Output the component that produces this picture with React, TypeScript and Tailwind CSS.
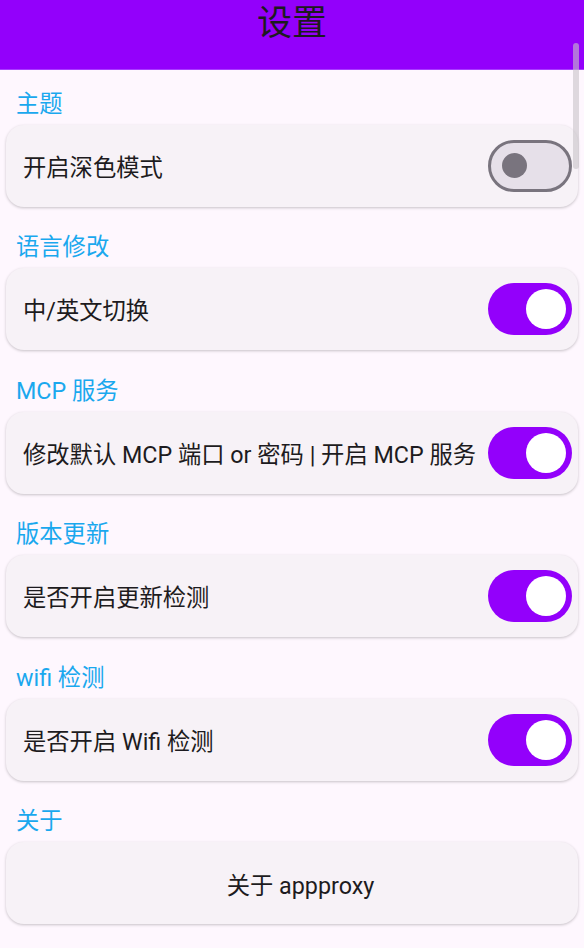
import React, { useState } from "react";

const font = { fontFamily: "Roboto, 'Noto Sans CJK SC', sans-serif" };

function Toggle({ on, onChange }: { on: boolean; onChange: () => void }) {
  return (
    <button
      onClick={onChange}
      className={`relative h-[52px] w-[84px] shrink-0 rounded-full ${
        on ? "bg-[#9300fb]" : "border-[3px] border-[#79747e] bg-[#e6e0e9]"
      }`}
    >
      {on ? (
        <span className="absolute right-[6px] top-[6px] h-[40px] w-[40px] rounded-full bg-white" />
      ) : (
        <span className="absolute left-[11px] top-[10.5px] h-[25px] w-[25px] rounded-full bg-[#79747e]" />
      )}
    </button>
  );
}

type Item = { title: string; label: string; on: boolean };

const initial: Item[] = [
  { title: "主题", label: "开启深色模式", on: false },
  { title: "语言修改", label: "中/英文切换", on: true },
  { title: "MCP 服务", label: "修改默认 MCP 端口 or 密码 | 开启 MCP 服务", on: true },
  { title: "版本更新", label: "是否开启更新检测", on: true },
  { title: "wifi 检测", label: "是否开启 Wifi 检测", on: true },
];

function SectionTitle({ children }: { children: React.ReactNode }) {
  return <div className="h-[44px] pl-4 pt-[1px] text-[23.3px] leading-[44px] text-[#1aa8ee]">{children}</div>;
}

export default function App() {
  const [items, setItems] = useState(initial);

  return (
    <div className="relative h-[948px] overflow-hidden bg-[#fef7fe] text-[#1d1b20]" style={font}>
      <header className="h-[70px] border-b border-[#a83cff] bg-[#9300fb] pt-[1px] text-center text-[35px] leading-[45px] text-[#1d1b20]">
        设置
      </header>

      <main className="flex flex-col px-[6px] pt-[10.5px]">
        {items.map((it, i) => (
          <section key={it.title} className={i > 0 ? "mt-[17.6px]" : ""}>
            <div className="-mx-[6px]">
              <SectionTitle>{it.title}</SectionTitle>
            </div>
            <div className="flex h-[82px] items-center justify-between rounded-[18px] bg-[#f7f2f7] pl-[17px] pr-[6px] shadow-[0_1px_3px_rgba(0,0,0,0.22)]">
              <span className="pt-[5px] text-[23.3px]">{it.label}</span>
              <Toggle
                on={it.on}
                onChange={() =>
                  setItems((prev) => prev.map((p, j) => (j === i ? { ...p, on: !p.on } : p)))
                }
              />
            </div>
          </section>
        ))}

        <section className="mt-[17.6px]">
          <div className="-mx-[6px]">
            <SectionTitle>关于</SectionTitle>
          </div>
          <div className="flex h-[82px] items-center justify-center rounded-[18px] bg-[#f7f2f7] pl-[17px] shadow-[0_1px_3px_rgba(0,0,0,0.22)]">
            <span className="pt-[5px] text-[23.3px]">关于 appproxy</span>
          </div>
        </section>
      </main>

      <div className="absolute right-[5px] top-[43px] h-[126px] w-[6px] rounded-full bg-[rgba(200,195,200,0.6)]" />
    </div>
  );
}
